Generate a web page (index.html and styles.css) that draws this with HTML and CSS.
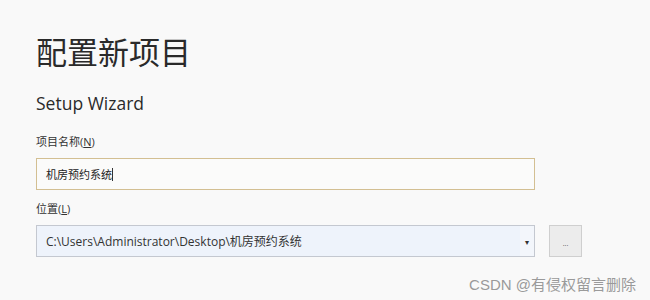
FILE: index.html
```html
<!DOCTYPE html>
<html lang="zh-CN">
  <head>
    <meta charset="UTF-8" />
    <title>配置新项目</title>
    <link rel="stylesheet" href="styles.css">
  </head>
  <body>
    <div class="page">
      <h1 class="title">配置新项目</h1>
      <h2 class="subtitle">Setup Wizard</h2>

      <label class="label">项目名称(<u>N</u>)</label>
      <div class="field field-name">机房预约系统<span class="caret"></span></div>

      <label class="label label-loc">位置(<u>L</u>)</label>
      <div class="row">
        <div class="field field-path">
          <span class="path">C:\Users\Administrator\Desktop\机房预约系统</span>
          <span class="drop">&#9662;</span>
        </div>
        <div class="browse">...</div>
      </div>
    </div>
    <div class="watermark">CSDN @有侵权留言删除</div>
  </body>
</html>
```

FILE: styles.css
```css
body {
  margin: 0;
  background: #f9f9f9;
  font-family: "Open Sans", "Noto Sans CJK SC", sans-serif;
  color: #1e1e1e;
  height: 300px;
  overflow: hidden;
}
.page {
  padding: 31px 0 0 36px;
}
.title {
  margin: 0;
  font-family: "Noto Sans CJK SC", sans-serif;
  font-size: 31px;
  font-weight: 400;
  line-height: 40px;
  color: #2a2a2a;
}
.subtitle {
  margin: 20px 0 0;
  font-size: 17.5px;
  font-weight: 400;
  line-height: 24px;
  color: #2a2a2a;
}
.label {
  display: block;
  margin-top: 19px;
  font-size: 11px;
  line-height: 16px;
  color: #333;
}
.label-loc {
  margin-top: 11px;
}
.field {
  box-sizing: border-box;
  height: 32px;
  width: 499px;
  margin-top: 8px;
  display: flex;
  align-items: center;
  font-size: 11px;
  color: #222;
}
.field-name {
  border: 1px solid #d3bf92;
  background: #fbfbfa;
  padding-left: 9px;
}
.caret {
  width: 1px;
  height: 13px;
  background: #333;
}
.row {
  display: flex;
  gap: 14px;
  margin-top: 8px;
}
.row .field {
  margin-top: 0;
}
.field-path {
  border: 1px solid #c4c8d0;
  background: #eef3fb;
  padding-left: 9px;
  font-size: 12px;
  color: #333;
}
.path {
  flex: 1;
}
.drop {
  width: 14px;
  align-self: stretch;
  display: flex;
  align-items: center;
  justify-content: center;
  background: #f3f6fb;
  font-size: 8px;
  color: #333;
}
.browse {
  box-sizing: border-box;
  width: 33px;
  height: 32px;
  border: 1px solid #cfcfcf;
  background: #ececec;
  font-size: 7px;
  display: flex;
  align-items: center;
  justify-content: center;
  color: #555;
  padding-top: 4px;
}
.watermark {
  position: absolute;
  right: 14px;
  top: 273px;
  font-family: "Liberation Sans", "Noto Sans CJK SC", sans-serif;
  font-size: 15px;
  color: #9a9a9a;
}
```
